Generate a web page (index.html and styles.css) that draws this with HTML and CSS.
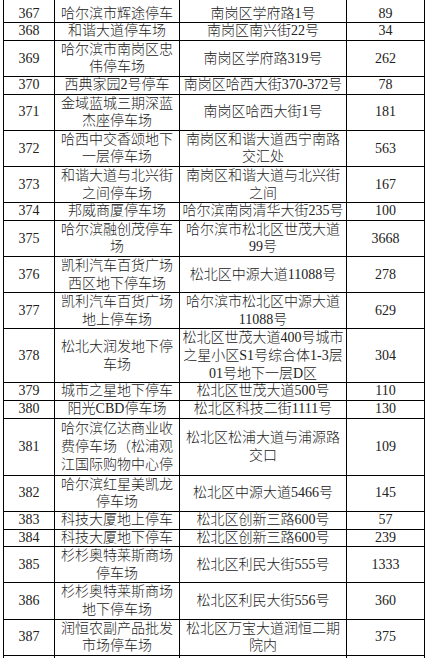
FILE: index.html
```html
<!DOCTYPE html>
<html lang="zh-CN">
<head>
<meta charset="utf-8">
<title>停车场列表</title>
<link rel="stylesheet" href="styles.css">
</head>
<body>
<table class="lots">
<colgroup>
<col class="c-no"><col class="c-name"><col class="c-addr"><col class="c-num">
</colgroup>
<tbody>
<tr class="first"><td>367</td><td>哈尔滨市辉途停车</td><td>南岗区学府路1号</td><td>89</td></tr>
<tr class="s"><td>368</td><td>和谐大道停车场</td><td>南岗区南兴街22号</td><td>34</td></tr>
<tr><td>369</td><td>哈尔滨市南岗区忠<br>伟停车场</td><td>南岗区学府路319号</td><td>262</td></tr>
<tr class="s"><td>370</td><td>西典家园2号停车</td><td>南岗区哈西大街370-372号</td><td>78</td></tr>
<tr><td>371</td><td>金域蓝城三期深蓝<br>杰座停车场</td><td>南岗区哈西大街1号</td><td>181</td></tr>
<tr><td>372</td><td>哈西中交香颂地下<br>一层停车场</td><td>南岗区和谐大道西宁南路<br>交汇处</td><td>563</td></tr>
<tr><td>373</td><td>和谐大道与北兴街<br>之间停车场</td><td>南岗区和谐大道与北兴街<br>之间</td><td>167</td></tr>
<tr class="s"><td>374</td><td>邦威商厦停车场</td><td>哈尔滨南岗清华大街235号</td><td>100</td></tr>
<tr><td>375</td><td>哈尔滨融创茂停车<br>场</td><td>哈尔滨市松北区世茂大道<br>99号</td><td>3668</td></tr>
<tr><td>376</td><td>凯利汽车百货广场<br>西区地下停车场</td><td>松北区中源大道11088号</td><td>278</td></tr>
<tr><td>377</td><td>凯利汽车百货广场<br>地上停车场</td><td>哈尔滨市松北区中源大道<br>11088号</td><td>629</td></tr>
<tr><td>378</td><td>松北大润发地下停<br>车场</td><td>松北区世茂大道400号城市<br>之星小区S1号综合体1-3层<br>01号地下一层D区</td><td>304</td></tr>
<tr class="s"><td>379</td><td>城市之星地下停车</td><td>松北区世茂大道500号</td><td>110</td></tr>
<tr class="s"><td>380</td><td>阳光CBD停车场</td><td>松北区科技二街1111号</td><td>130</td></tr>
<tr class="tall"><td>381</td><td>哈尔滨亿达商业收<br>费停车场（松浦观<br>江国际购物中心停</td><td>松北区松浦大道与浦源路<br>交口</td><td>109</td></tr>
<tr><td>382</td><td>哈尔滨红星美凯龙<br>停车场</td><td>松北区中源大道5466号</td><td>145</td></tr>
<tr class="s"><td>383</td><td>科技大厦地上停车</td><td>松北区创新三路600号</td><td>57</td></tr>
<tr class="s"><td>384</td><td>科技大厦地下停车</td><td>松北区创新三路600号</td><td>239</td></tr>
<tr><td>385</td><td>杉杉奥特莱斯商场<br>停车场</td><td>松北区利民大街555号</td><td>1333</td></tr>
<tr><td>386</td><td>杉杉奥特莱斯商场<br>地下停车场</td><td>松北区利民大街556号</td><td>360</td></tr>
<tr><td>387</td><td>润恒农副产品批发<br>市场停车场</td><td>松北区万宝大道润恒二期<br>院内</td><td>375</td></tr>
<tr class="s"><td>&nbsp;</td><td>&nbsp;</td><td>&nbsp;</td><td>&nbsp;</td></tr>
</tbody>
</table>
</body>
</html>
```
FILE: styles.css
```css
html, body {
  margin: 0;
  background: #ffffff;
}
body {
  padding-left: 3px;
  font-family: "Liberation Serif", "Noto Sans CJK SC", serif;
  font-size: 14px;
  font-weight: 300;
  color: #222222;
  overflow: hidden;
}
.lots {
  border-collapse: collapse;
  table-layout: fixed;
  width: 422px;
}
.c-no { width: 51px; }
.c-name { width: 125px; }
.c-addr { width: 167px; }
.c-num { width: 78px; }
.lots td {
  border: 1px solid #000;
  padding: 0;
  text-align: center;
  vertical-align: middle;
  line-height: 17.6px;
  white-space: nowrap;
  overflow: hidden;
}
.lots tr.first td {
  border-top: none;
  line-height: 16px;
  padding-top: 6px;
}
.lots tr.s td {
  line-height: 16.7px;
}
.lots tr.tall td {
  line-height: 18px;
  padding: 1px 0;
}
```
